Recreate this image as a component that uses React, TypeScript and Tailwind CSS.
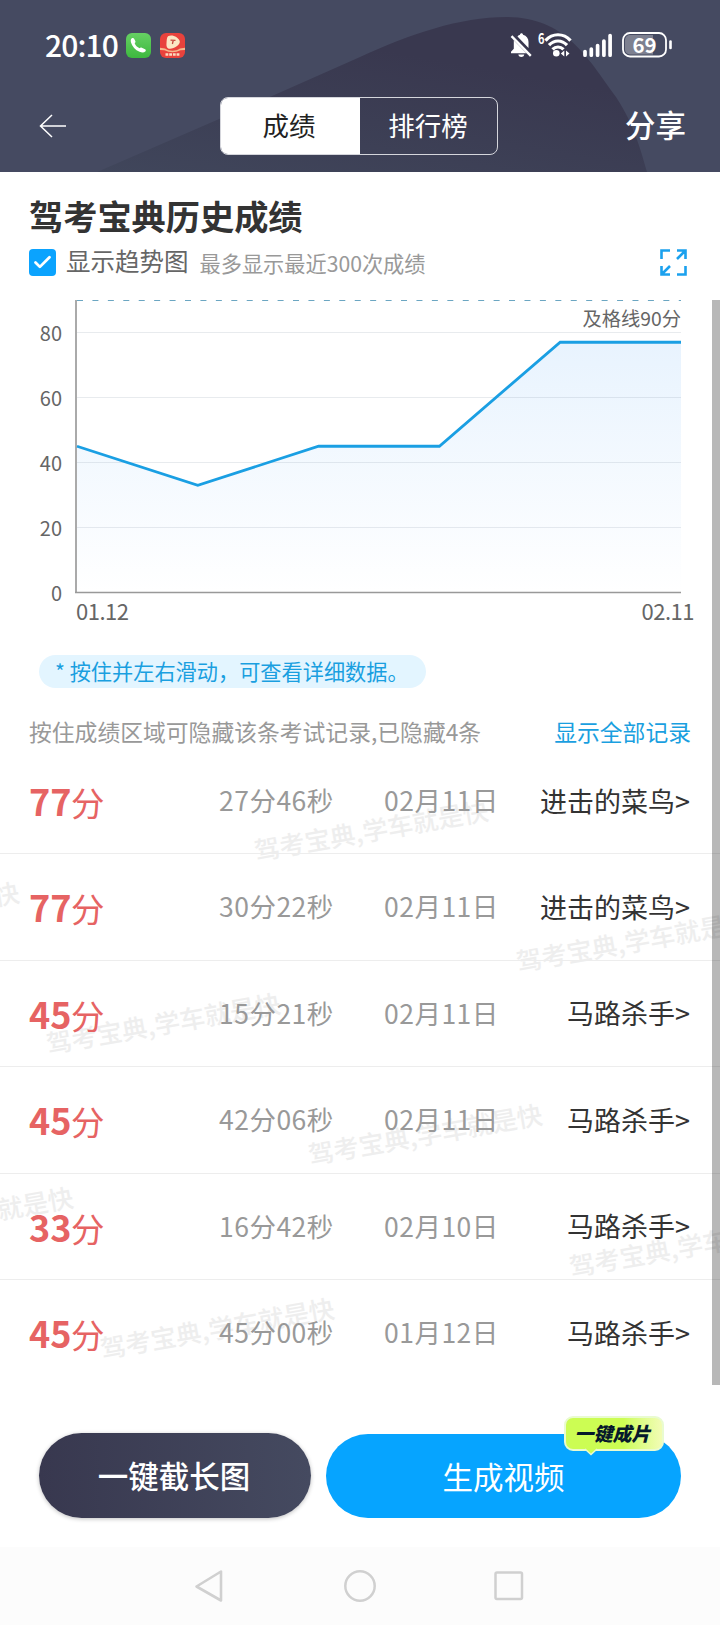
import { Check } from 'lucide-react';

interface ExamRecord {
  score: number;
  duration: string;
  date: string;
  title: string;
}

const records: ExamRecord[] = [
  { score: 77, duration: '27分46秒', date: '02月11日', title: '进击的菜鸟' },
  { score: 77, duration: '30分22秒', date: '02月11日', title: '进击的菜鸟' },
  { score: 45, duration: '15分21秒', date: '02月11日', title: '马路杀手' },
  { score: 45, duration: '42分06秒', date: '02月11日', title: '马路杀手' },
  { score: 33, duration: '16分42秒', date: '02月10日', title: '马路杀手' },
  { score: 45, duration: '45分00秒', date: '01月12日', title: '马路杀手' },
];

// Centre points of the repeated watermark, relative to the record list
const watermarks = [
  { x: 371, y: 80.5 },
  { x: -98, y: 162.5 },
  { x: 633, y: 191.5 },
  { x: 163, y: 273.5 },
  { x: 425, y: 384.5 },
  { x: -44, y: 467.5 },
  { x: 686, y: 496.5 },
  { x: 217, y: 578.5 },
];

// Oldest score first
const trend = [45, 33, 45, 45, 77, 77];

const CHART = { left: 77, right: 681, top: 15.5, bottom: 307.5 };

const toY = (value: number) => CHART.bottom - value * 3.25;
const toX = (index: number) =>
  CHART.left + (index * (CHART.right - CHART.left)) / (trend.length - 1);

function StatusBar() {
  return (
    <div className="relative flex h-[90px] items-center pl-[45px] pr-[48px] text-white">
      <span className="-mt-[2px] w-[81px] whitespace-nowrap text-[30px] font-medium leading-none tracking-[-0.9px]">20:10</span>
      <svg className="h-[25px] w-[25px]" viewBox="0 0 25 25">
        <defs>
          <linearGradient id="phoneBg" x1="0" y1="0" x2="0" y2="1">
            <stop offset="0" stopColor="#66d063" />
            <stop offset="1" stopColor="#3db83f" />
          </linearGradient>
        </defs>
        <rect width="25" height="25" rx="6" fill="url(#phoneBg)" />
        <path
          d="M5.800 5.300c1-.7 1.800-.5 2.300.4l1.200 2.200c.4.900.1 1.500-.7 2.100.8 2.300 2.700 4.300 5 5.300.6-.8 1.300-1.100 2.200-.6l3.300 1.600c.9.600.9 1.500.2 2.200-1.400 1.400-3.500 1.300-5.800.2C9.300 16.900 6.100 13.300 5 9.400c-.5-1.800-.3-3.200.8-4.100z"
          fill="#fff"
        />
      </svg>
      <svg className="ml-[9px] h-[25px] w-[25px]" viewBox="0 0 25 25">
        <rect width="25" height="25" rx="6" fill="#e8423c" />
        <path d="M8 3.300C11.500 .8 19 4 19.800 8.500c.3 3.500-5.300 7-9.800 7.300-3 .2-3.800-2.500-3.500-5.300.2-2.800.2-6.200 1.500-7.200z" fill="#fbe6c4" />
        <path d="M10.500 7.200l5 .2M13.200 7.500l-.8 3.500" fill="none" stroke="#c4453c" strokeWidth="1.300" />
        <path d="M0 14.800l5 .8c4.500 2.900 10.500 2.900 15 0l5-.8v2.200l-4.500.3c-5 2.500-11 2.500-16 0l-4.500-.3z" fill="#f6b98d" />
        <path d="M5.500 21.500h14" stroke="#fbdcc0" strokeWidth="2.600" strokeDasharray="2.800 .9" />
      </svg>

      <svg className="ml-auto h-[25px] w-[22px]" viewBox="0 0 22 25">
        <path d="M7.500 3.500C8.300 2.500 9.300 2 10 1.800c.1-2 2.900-2 3 0 3.600 1 5.500 3.700 5.500 7.200v6z" fill="#fff" />
        <path d="M3.800 7.300L16.500 20.300H1v-1.500l2.800-3z" fill="#fff" />
        <path d="M8.300 21.500h6c-.5 1.800-1.500 2.500-3 2.500s-2.500-.7-3-2.500z" fill="#fff" />
        <path d="M1.500 3.200L20.800 22.800" stroke="#fff" strokeWidth="2.400" />
      </svg>
      <svg className="ml-[6px] h-[26px] w-[34px] overflow-visible" viewBox="0 0 34 26">
        <text x="0" y="11.500" fontSize="14" fontWeight="700" fill="#fff" textLength="6.500" lengthAdjust="spacingAndGlyphs">
          6
        </text>
        <g fill="none" stroke="#fff" strokeWidth="3.200">
          <path d="M7.500 8.600C14.500 .8 25.500 .8 32.500 8.600" />
          <path d="M11 13.200c5.200-5.600 12.800-5.600 18 0" />
          <path d="M14.500 17.400c3.200-3.200 7.800-3.200 11 0" />
        </g>
        <circle cx="18.300" cy="21.300" r="3.300" fill="#fff" />
        <path d="M26.300 18.500v6L22.800 21.500zM28 18.500v6l3.500-3z" fill="#fff" />
      </svg>
      <svg className="ml-[11px] h-[25px] w-[29px]" viewBox="0 0 29 25">
        <g stroke="#fff" strokeWidth="3.700" strokeLinecap="round">
          <path d="M2 18.500v3.700M8.300 16v6.200M14.600 12.500v9.700M20.900 8v14.200M27.100 2.500v19.700" />
        </g>
      </svg>
      <svg className="ml-[10px] h-[26px] w-[50px] overflow-visible" viewBox="0 0 50 26">
        <rect x="1" y="1" width="43" height="23.500" rx="7" fill="none" stroke="#fff" strokeWidth="1.800" />
        <path d="M8 3h23v19.500H8a5 5 0 0 1-5-5V8a5 5 0 0 1 5-5z" fill="#fff" fillOpacity=".3" />
        <path d="M48.500 9.500v6.500" stroke="#fff" strokeWidth="2.600" strokeLinecap="round" />
        <text x="22.500" y="20.500" fontSize="20.500" fontWeight="700" fill="#fff" textAnchor="middle">
          69
        </text>
      </svg>
    </div>
  );
}

function Header() {
  return (
    <header className="relative h-[172px] shrink-0 bg-[#454a61]">
      <svg className="absolute inset-0" width="720" height="172" viewBox="0 0 720 172">
        <defs>
          <linearGradient id="hill" x1="0" y1="1" x2="0.500" y2="0.200">
            <stop offset="0" stopColor="#40465b" />
            <stop offset="1" stopColor="#39384f" />
          </linearGradient>
        </defs>
        <path
          d="M97 172L272 96 360 57C410 34 460 17 506 17c58 0 80 38 110 80 14 21 22 42 31 75z"
          fill="url(#hill)"
        />
      </svg>
      <StatusBar />
      <div className="relative flex h-[71px] items-center justify-between pl-[39px] pr-[34px]">
        <svg className="h-[24px] w-[28px]" viewBox="0 0 28 24" fill="none" stroke="#fff" strokeWidth="1.500">
          <path d="M27 12H1.500M13 1L1.500 12 13 23" />
        </svg>
        <div className="ml-[25px] flex h-[58px] w-[278px] overflow-hidden rounded-lg border border-[#d5d6dc] text-[26.5px] leading-none">
          <button className="w-[139px] bg-white pr-[2px] text-[#222]">成绩</button>
          <button className="flex-1 text-white">排行榜</button>
        </div>
        <button className="-mt-[2px] text-[30.5px] font-medium leading-none text-white">分享</button>
      </div>
    </header>
  );
}

function TrendChart() {
  const points = trend.map((score, i) => `${toX(i)},${toY(score)}`).join(' ');

  return (
    <svg className="block" width="720" height="345" viewBox="0 0 720 345">
      <defs>
        <linearGradient id="area" x1="0" y1="57" x2="0" y2="307" gradientUnits="userSpaceOnUse">
          <stop offset="0" stopColor="#e8f3fe" />
          <stop offset="1" stopColor="#ffffff" />
        </linearGradient>
      </defs>
      <polygon
        points={`${CHART.left},${CHART.bottom} ${points} ${CHART.right},${CHART.bottom}`}
        fill="url(#area)"
      />
      {[20, 40, 60, 80].map((value) => (
        <path key={value} d={`M${CHART.left} ${toY(value)}H${CHART.right}`} stroke="#8090a0" strokeOpacity=".18" />
      ))}
      {[0, 20, 40, 60, 80].map((value) => (
        <text key={value} x="62" y={toY(value) + 8.5} fontSize="20" fill="#666" textAnchor="end">
          {value}
        </text>
      ))}
      <path d={`M${CHART.left} ${CHART.top}H${CHART.right}`} stroke="#6ba6c2" strokeDasharray="6 9.430" />
      <text x="681" y="40.500" fontSize="19.3" fill="#666" textAnchor="end">
        及格线90分
      </text>
      <path d="M76 15V307.500" stroke="#aaa" strokeWidth="2" />
      <path d={`M75 307.500H${CHART.right}`} stroke="#999" strokeWidth="1.500" />
      <polyline points={points} fill="none" stroke="#1a9fe3" strokeWidth="2.800" />
      <text x="76" y="335" fontSize="22" fill="#666" textLength="53">
        01.12
      </text>
      <text x="641.500" y="335" fontSize="22" fill="#666" textLength="53">
        02.11
      </text>
    </svg>
  );
}

function RecordRow({ record, last }: { record: ExamRecord; last: boolean }) {
  return (
    <li
      className={`relative flex h-[106.4px] items-center pb-[1px] pl-[29px] pr-[30px] text-[26.5px] leading-none ${
        last ? '' : 'border-b border-[#ededed]'
      }`}
    >
      <div className="flex w-[190px] items-baseline text-[#e66363]">
        <span className="w-[42px] text-[36px] font-bold leading-none">{record.score}</span>
        <span className="text-[33.5px] leading-none">分</span>
      </div>
      <span className="w-[165px] whitespace-nowrap tracking-[0.5px] text-[#999]">{record.duration}</span>
      <span className="whitespace-nowrap tracking-[0.5px] text-[#999]">{record.date}</span>
      <span className="ml-auto whitespace-nowrap text-[27px] text-[#333]">{record.title}&gt;</span>
    </li>
  );
}

function RecordList() {
  return (
    <ul className="relative h-[638px] overflow-hidden">
      {watermarks.map(({ x, y }) => (
        <li
          key={`${x}-${y}`}
          className="absolute -translate-x-1/2 -translate-y-1/2 -rotate-10 whitespace-nowrap text-[25.5px] font-medium leading-none text-[#eee]"
          style={{ left: x, top: y }}
        >
          驾考宝典,学车就是快
        </li>
      ))}
      {records.map((record, i) => (
        <RecordRow key={i} record={record} last={i === records.length - 1} />
      ))}
    </ul>
  );
}

function BottomActions() {
  return (
    <div className="flex h-[161px] gap-[15px] pl-[39px] pr-[39px] pt-[47px]">
      <button className="h-[85px] w-[272px] rounded-full bg-gradient-to-r from-[#38384f] to-[#454a60] pr-[2px] text-[30.5px] font-medium leading-none text-white shadow-[0_1px_4px_rgba(0,0,0,0.25)]">
        一键截长图
      </button>
      <button className="relative mt-px h-[84px] flex-1 rounded-full bg-[#06a4ff] text-[30.5px] leading-none text-white">
        生成视频
        <span className="absolute -top-[18px] left-[238px] flex h-[35px] w-[100px] items-center justify-center rounded-[9px] border-2 border-[#e9fbd0] bg-gradient-to-r from-[#ccfd53] from-60% to-[#f2fcb5] pb-[2px] pr-[3px] text-[19px] font-black italic leading-none text-[#06192b]">
          一键成片
          <svg className="absolute left-[18px] top-[30px]" width="14" height="8" viewBox="0 0 14 8">
            <path d="M1 1l6 5.500L13 1" fill="#ccfd53" stroke="#e9fbd0" strokeWidth="1.500" />
          </svg>
        </span>
      </button>
    </div>
  );
}

function NavBar() {
  return (
    <nav className="flex h-[78px] items-center justify-center bg-[#fcfcfc] pr-[2px] text-[#d0d0d0]">
      <svg className="h-[34px] w-[30px]" viewBox="0 0 30 34" fill="none" stroke="currentColor" strokeWidth="2.600" strokeLinejoin="round">
        <path d="M27 2.500v29L2.500 17.500z" />
      </svg>
      <svg className="ml-[119px] h-[34px] w-[34px]" viewBox="0 0 34 34" fill="none" stroke="currentColor" strokeWidth="2.500">
        <circle cx="17" cy="17" r="14.700" />
      </svg>
      <svg className="ml-[116px] h-[32px] w-[32px]" viewBox="0 0 32 32" fill="none" stroke="currentColor" strokeWidth="2.500">
        <rect x="2.500" y="2.500" width="26.500" height="26.500" rx="1.500" />
      </svg>
    </nav>
  );
}

export default function App() {
  return (
    <div
      lang="zh-CN"
      className="relative flex h-[1625px] w-[720px] flex-col overflow-hidden bg-white font-['Noto_Sans_CJK_SC',sans-serif]"
    >
      <Header />

      <main className="h-[1214px] shrink-0">
        <h1 className="mt-[20px] flex h-[46px] items-center pl-[29px] text-[34.2px] font-bold leading-none text-[#333]">
          驾考宝典历史成绩
        </h1>
        <div className="mt-px flex h-[46px] items-center pl-[29px] pr-[33px]">
          <span className="flex h-[27px] w-[27px] items-center justify-center rounded bg-[#0ba3fe] text-white">
            <Check size={21} strokeWidth={3.2} />
          </span>
          <span className="-mt-[2px] ml-[10px] text-[24.5px] leading-none text-[#666]">显示趋势图</span>
          <span className="ml-[11px] mt-px text-[21.2px] leading-none text-[#999]">最多显示最近300次成绩</span>
          <svg className="ml-auto mt-px h-[27px] w-[27px]" viewBox="0 0 27 27" fill="none" stroke="#1ba1ee" strokeWidth="2.600">
            <path d="M1.500 10V1.500H10M17 1.500h8.500V10M25.500 1.500L17 10M10 25.500H1.500V17M1.500 25.500L10 17M17 25.500h8.500V17" />
          </svg>
        </div>

        <TrendChart />

        <p className="ml-[39px] mt-[25px] flex h-[33px] w-[387px] items-center whitespace-pre rounded-full bg-[#e3f5ff] pb-[2px] pl-[16px] text-[21.2px] leading-none text-[#1a9fe0]">
          * 按住并左右滑动，可查看详细数据。
        </p>

        <div className="flex h-[60px] items-center justify-between pl-[29px] pr-[29px] pt-[28px] text-[22.8px] leading-none">
          <span className="text-[#999]">按住成绩区域可隐藏该条考试记录,已隐藏4条</span>
          <button className="text-[#1a9fe0]">显示全部记录</button>
        </div>

        <RecordList />
      </main>

      <BottomActions />
      <NavBar />

      {/* scrollbar thumb */}
      <div className="absolute right-0 top-[300px] h-[1085px] w-[8px] bg-black/28" />
    </div>
  );
}
